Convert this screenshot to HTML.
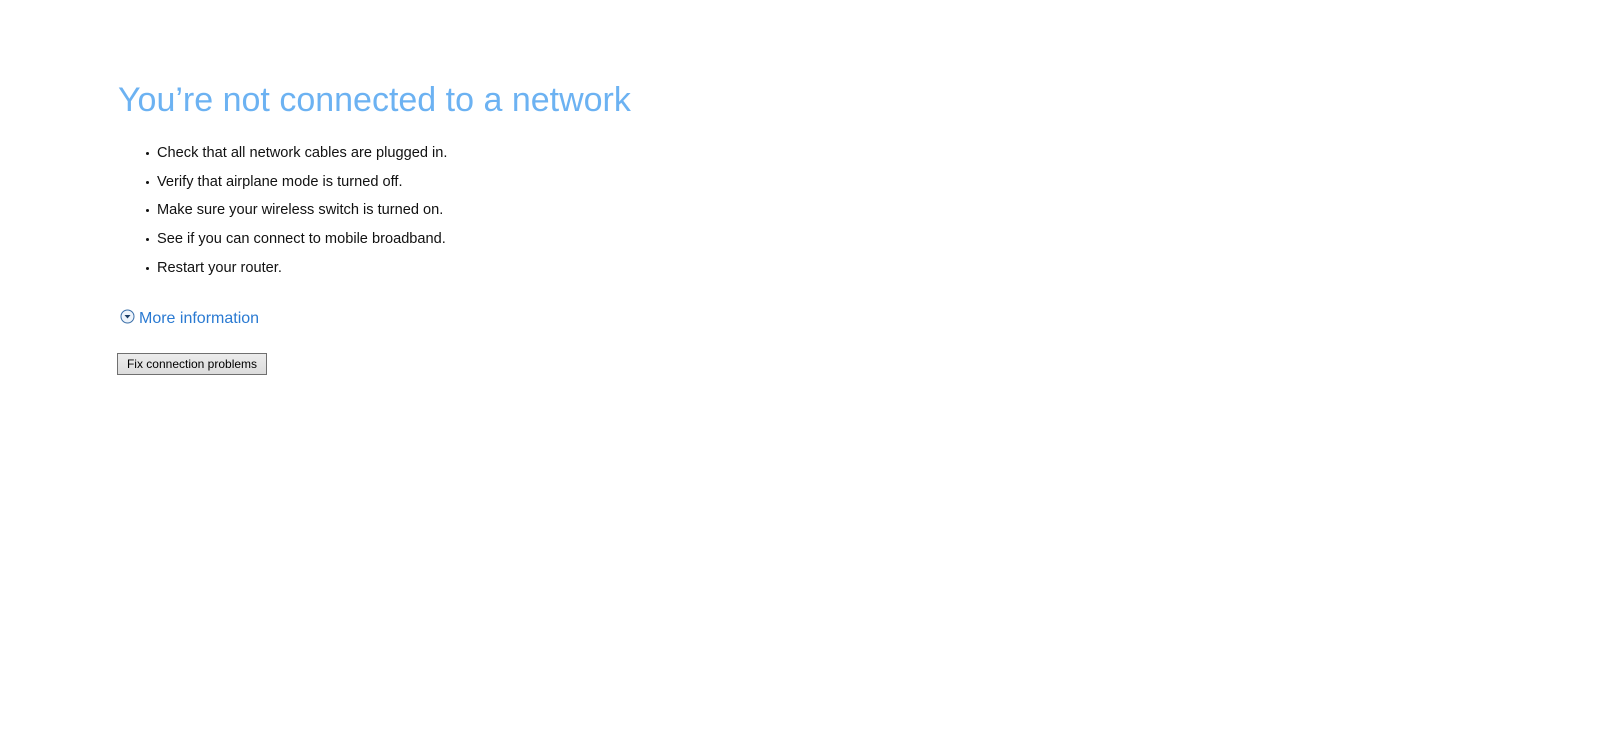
<!DOCTYPE html>
<html><head><style>
body{margin:0;background:#fff;width:1600px;height:729px;position:relative;font-family:"Liberation Sans",sans-serif;overflow:hidden}
h1{position:absolute;left:118px;top:78px;margin:0;font-weight:normal;font-size:34px;color:#6cb2f2;white-space:nowrap;line-height:44px}
ul{position:absolute;left:157px;top:139px;margin:0;padding:0;list-style:none}
li{font-size:14.6px;color:#111;line-height:28.7px;height:28.7px;position:relative;white-space:nowrap}
li:before{content:"";position:absolute;left:-11px;top:13px;width:3px;height:3px;border-radius:50%;background:#111}
.more{position:absolute;left:120px;top:309px;font-size:16px;color:#2a7ad2;white-space:nowrap;line-height:20px}
.more svg{position:absolute;left:0;top:0px}
.more span{margin-left:19px}
button{position:absolute;left:117px;top:353px;width:150px;height:22px;font-family:"Liberation Sans",sans-serif;font-size:12px;color:#000;background:linear-gradient(#ececec,#dcdcdc);border:1px solid #707070;padding:0}
</style></head><body>
<h1>You’re not connected to a network</h1>
<ul>
<li>Check that all network cables are plugged in.</li>
<li>Verify that airplane mode is turned off.</li>
<li>Make sure your wireless switch is turned on.</li>
<li>See if you can connect to mobile broadband.</li>
<li>Restart your router.</li>
</ul>
<div class="more"><svg width="15" height="15" viewBox="0 0 15 15"><circle cx="7.5" cy="7.5" r="6.5" fill="#eef4fb" stroke="#3a6ea8" stroke-width="1"/><path d="M4.5 6 L10.5 6 L7.5 9.5 Z" fill="#1e3f66"/></svg><span>More information</span></div>
<button>Fix connection problems</button>
</body></html>
